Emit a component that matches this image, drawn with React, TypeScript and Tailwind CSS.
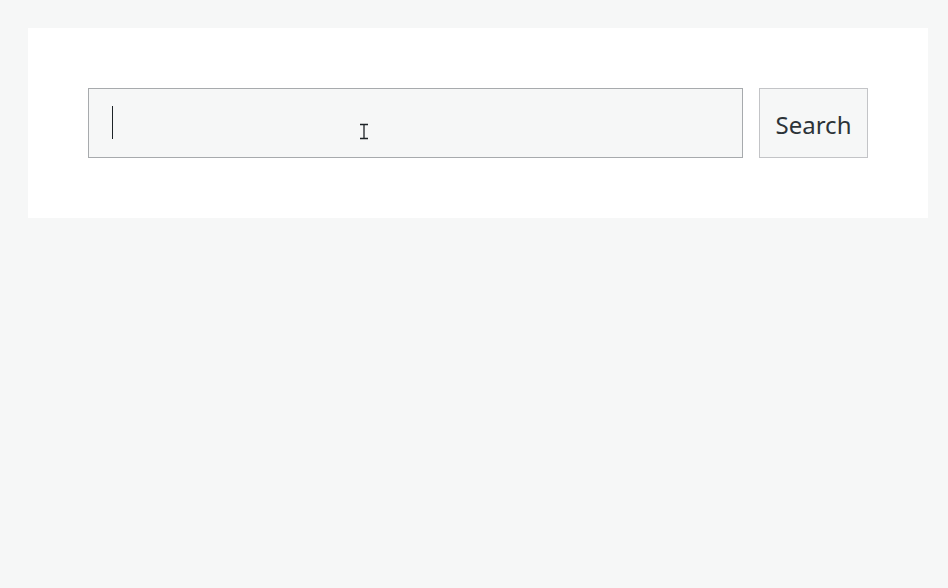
export default function App() {
  return (
    <div className="min-h-[588px] bg-[#f6f7f7] p-[28px] pr-[20px]" style={{ fontFamily: '"Noto Sans", "Open Sans", sans-serif' }}>
      <div className="flex items-center gap-4 bg-white p-[60px]">
        <div className="relative h-[70px] flex-1">
          <input
            type="text"
            aria-label="Search"
            className="h-full w-full border border-[#a7aaad] bg-[#f6f7f7] px-[23px] text-2xl text-[#2c3338] outline-none"
          />
          {/* fake caret */}
          <span className="pointer-events-none absolute left-[24px] top-[18px] h-[33px] w-px bg-[#1d2327]" />
          {/* mouse I-beam */}
          <svg
            className="pointer-events-none absolute left-[271px] top-[35px]"
            width="10"
            height="18"
            viewBox="0 0 10 18"
            fill="none"
            stroke="#1d2327"
            strokeWidth="1.3"
          >
            <path d="M1 1.5h8M5 1.5v14M1 15.5h8" />
          </svg>
        </div>
        <button
          type="button"
          className="h-[70px] w-[109px] border border-[#c3c4c7] bg-[#f6f7f7] pt-1 text-2xl text-[#2c3338]"
        >
          Search
        </button>
      </div>
    </div>
  );
}
